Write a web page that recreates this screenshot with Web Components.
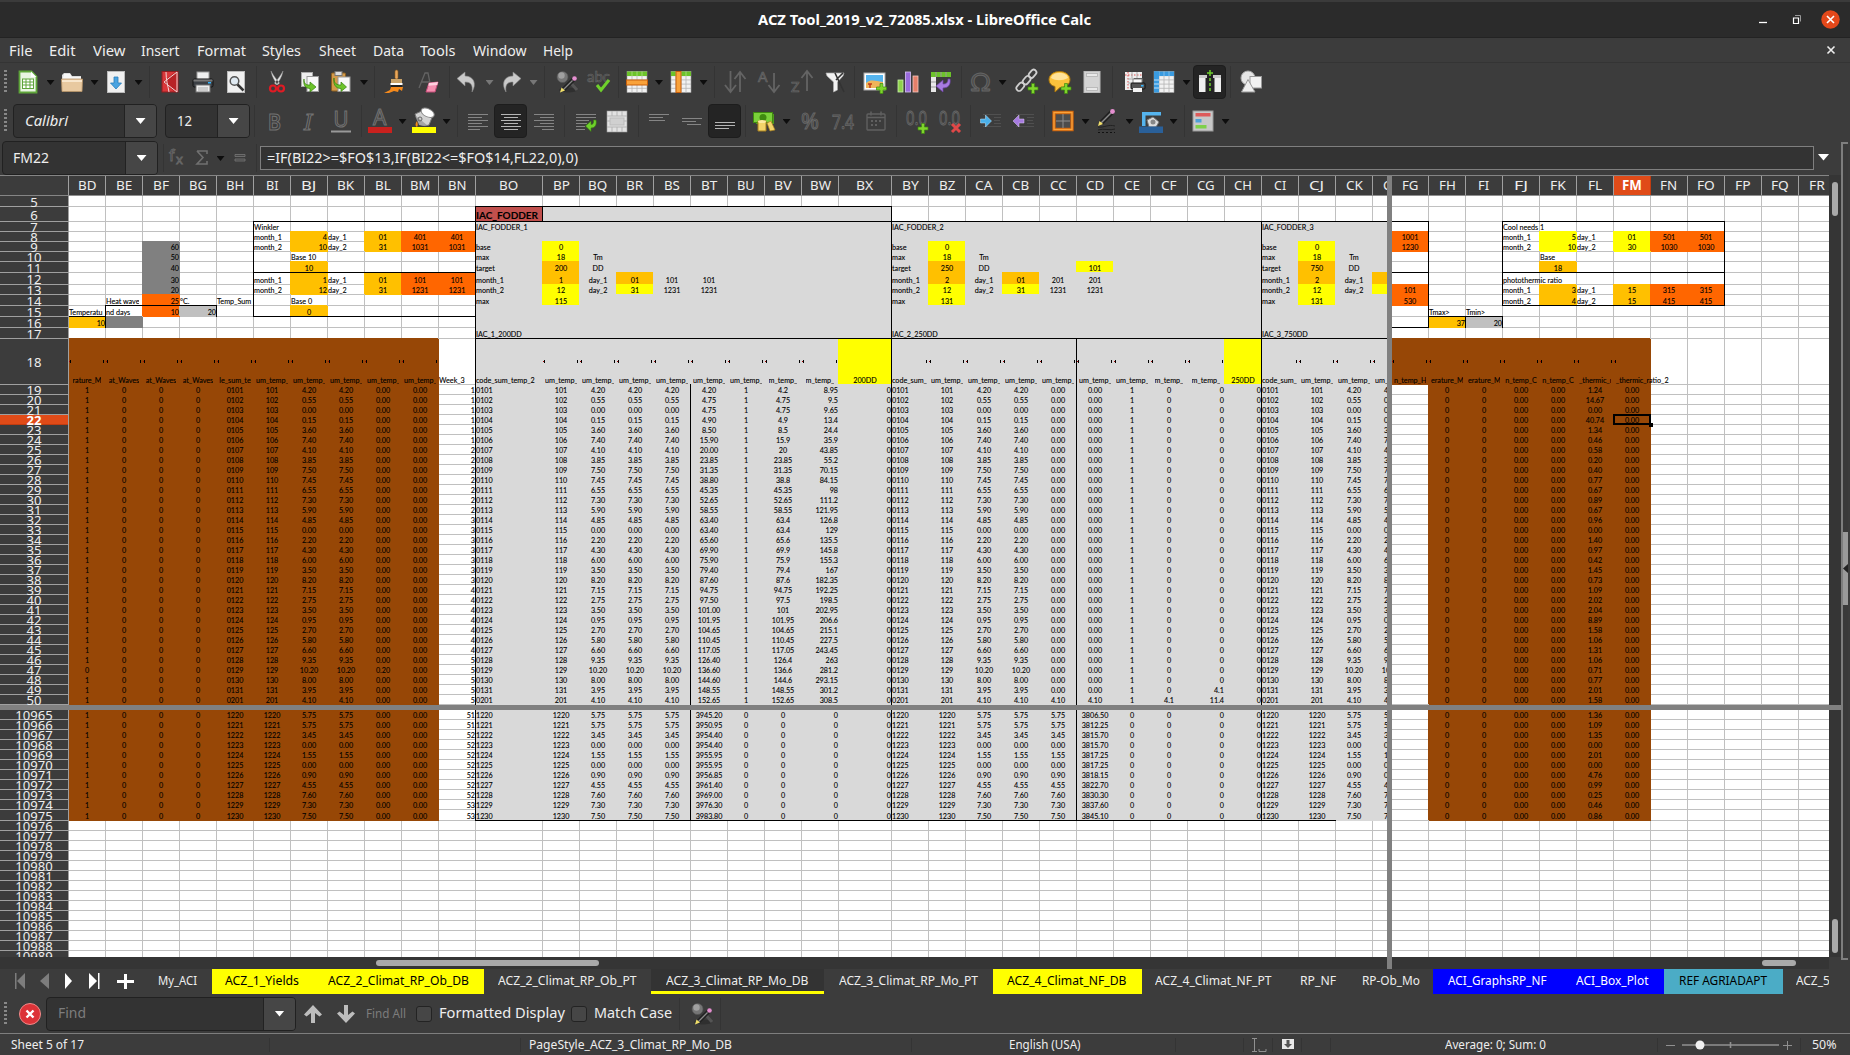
<!DOCTYPE html>
<html lang="en">
<head>
<meta charset="utf-8">
<title>ACZ Tool_2019_v2_72085.xlsx - LibreOffice Calc</title>
<style>
html,body{margin:0;height:100%;overflow:hidden;background:#3c3c3c}
</style>
</head>
<body>
<calc-window></calc-window>
<script>
const UI = '"Noto Sans","Open Sans",sans-serif';

class Base extends HTMLElement {
  constructor(){ super(); this.attachShadow({mode:'open'}); }
  render(html){ this.shadowRoot.innerHTML = html; }
}

/* Label squeezed or stretched horizontally to a given advance width */
class FitText extends Base {
  connectedCallback(){
    this.render(`<style>:host{display:block;white-space:nowrap;flex:none}span{display:inline-block;transform-origin:0 50%;white-space:pre}</style><span><slot></slot></span>`);
    const w = +this.getAttribute('w'), s = this.shadowRoot.querySelector('span');
    const n = s.getBoundingClientRect().width;
    this.style.width = w + 'px';
    if (n) s.style.transform = `scaleX(${w/n})`;
  }
}
customElements.define('fit-text', FitText);

/* ---------- icons ---------- */
const plus = (x,y,c='#7fd42c') => `<path d="M${x-1.5} ${y-5}h3v3.500h3.500v3h-3.500v3.500h-3v-3.500h-3.500v-3h3.500z" fill="${c}" stroke="#3f8a10" stroke-width=".7"/>`;
const lines = (a,c='#858585') => a.map(([x,y,w])=>`<rect x="${x}" y="${y}" width="${w}" height="1" fill="${c}"/>`).join('');
const sheet = (x,y,w,h,top) => { let s=`<rect x="${x}" y="${y}" width="${w}" height="${h}" fill="#f2f2f2" stroke="#999" stroke-width=".6"/>`;
  for(let i=1;i<4;i++) s+=`<path d="M${x+i*w/4} ${y}v${h}" stroke="#b4b4b4" stroke-width=".8"/>`;
  for(let i=1;i<5;i++) s+=`<path d="M${x} ${y+i*h/5}h${w}" stroke="#b4b4b4" stroke-width=".8"/>`;
  return s+`<rect x="${x}" y="${y}" width="${w}" height="4.500" fill="${top}"/><path d="M${x+w/4} ${y}v4.500M${x+w/2} ${y}v4.500M${x+w*3/4} ${y}v4.500" stroke="#fff" stroke-opacity=".35"/>`; };
const page = `<rect x="3.500" y="1.500" width="17" height="21" fill="#f0f0f0" stroke="#bbb"/>`;
const ICON = {
 new:`<path d="M3.500 1.500h12l5 5v16h-17z" fill="#e9f5e2" stroke="#5fa53a" stroke-width="1.800"/><path d="M15 1.500v5.500h5.500z" fill="#fff"/><rect x="6.500" y="9" width="11" height="9.500" fill="#fff" stroke="#5fa53a"/><path d="M6 12h12M6 15h12M10 9v10M14 9v10" stroke="#5fa53a"/>`,
 open:`<path d="M2 21V5l2-2h6l2 3h9v3z" fill="#ddd"/><path d="M4 4h6l2 3h9v4H2z" fill="#f7f7f7"/><path d="M1.500 9h21l-.5 12.500h-20z" fill="#e8c9a0" stroke="#b9966a" stroke-width=".8"/><path d="M2 10h20v2H2z" fill="#f8e6cc"/>`,
 save:`${page}<path d="M10 7h4v6h3.500L12 19l-5.500-6H10z" fill="#4aa3e0" stroke="#2a7fbd" stroke-width=".8"/>`,
 pdf:`<rect x="4" y="1.500" width="16" height="20.500" fill="#d9373a" stroke="#8f1d20"/><path d="M17 2 5 12l12 10h3V2z" fill="#b82226"/><path d="M19 2v20L6 12zM8 2c0 8 2 14 3 20" fill="none" stroke="#f4d6d6" stroke-width="1"/>`,
 print:`<rect x="6" y="2" width="12" height="8" fill="#f0f0f0" stroke="#999"/><rect x="2" y="9" width="20" height="8" rx="1.500" fill="#3b3f44" stroke="#111"/><path d="M2.500 9.500h19v2h-19z" fill="#777"/><rect x="17" y="12" width="3" height="1.500" fill="#35b6ff"/><rect x="5" y="15" width="14" height="7" fill="#eee" stroke="#777"/><path d="M7 18h10M7 20h10" stroke="#aaa"/>`,
 preview:`${page}<circle cx="10.500" cy="11" r="4.300" fill="#dfe9f1" stroke="#555" stroke-width="1.500"/><path d="m13.500 14.500 6 6" stroke="#333" stroke-width="2.500"/>`,
 cut:`<path d="M6 1c1 6 4 10 6.500 14L14.500 13C11 9 8 5 6 1zM18 1c-1 6-4 10-6.500 14L9.500 13C13 9 16 5 18 1z" fill="#e8e8e8" stroke="#999" stroke-width=".5"/><circle cx="8" cy="18.500" r="3" fill="none" stroke="#e01b24" stroke-width="2.200"/><circle cx="16" cy="18.500" r="3" fill="none" stroke="#e01b24" stroke-width="2.200"/>`,
 copy:`<rect x="3.500" y="2.500" width="11" height="14" fill="#eee" stroke="#aaa"/><rect x="9" y="6.500" width="11.500" height="15" fill="#f8f8f8" stroke="#999"/><path d="M6 9c0 5 2 6 6 6v-3l6 5-6 5v-3.500c-5 0-7-4-6-9.500z" fill="#6cc32a" stroke="#35800c" stroke-width=".7"/>`,
 paste:`<rect x="2.500" y="3" width="14" height="18" rx="1" fill="#d39a4a" stroke="#8b5e20"/><rect x="6" y="1.500" width="7" height="4" fill="#ddd" stroke="#777"/><rect x="9" y="7" width="12" height="14.500" fill="#f8f8f8" stroke="#999"/><path d="M5 8c0 6 3 7 7 7v-3l5.500 5-5.500 4.500v-3c-6 0-8-5-7-10.500z" fill="#6cc32a" stroke="#35800c" stroke-width=".7"/>`,
 brush:`<rect x="12" y="0" width="3" height="9" rx="1.500" fill="#e9a75c" stroke="#8e5c1c" stroke-width=".6"/><path d="M8 9h11v5H8z" fill="#c9a36a"/><rect x="7.500" y="13" width="12" height="2" fill="#fff"/><path d="M8 15h11v3H8z" fill="#222"/><path d="M8 17h12l-1 4-3-2-1 3-4-1-5 2H1l6-3z" fill="#f58a1c"/>`,
 clear:`<path d="m2 18 6-15h3l3 15M5 12h7" fill="none" stroke="#636363" stroke-width="1.300"/><path d="m12 13 9-1-3 10H9z" fill="#f58fb0" stroke="#c44c78"/><path d="m12 13 9-1-.8 3-9 .8z" fill="#ffd0df"/>`,
 undo:`<path d="M2 8.500 10 2v4c9 0 12 8 7 16 1-7-1-10-7-10v4z" fill="#c9c9c9" stroke="#888" stroke-width=".6"/>`,
 redo:`<path d="M22 8.500 14 2v4C5 6 2 14 7 22c-1-7 1-10 7-10v4z" fill="#c9c9c9" stroke="#888" stroke-width=".6"/>`,
 find:`<ellipse cx="13" cy="20" rx="9" ry="2.500" fill="#2f2f2f"/><circle cx="7.500" cy="7" r="5.500" fill="#767676" stroke="#555" stroke-width=".6"/><circle cx="6.500" cy="5.500" r="3.200" fill="#a0a0a0"/><path d="m15 12 7 8" stroke="#555" stroke-width="3"/><path d="m8 20 11-11" stroke="#222" stroke-width="4.400"/><path d="m8.500 19.500 9-9" stroke="#8a8a8a" stroke-width="1.300"/><circle cx="19.500" cy="8.500" r="2.300" fill="#e58fd0"/><path d="m5 22.500 1.500-5 3.500 3z" fill="#f2e06a"/>`,
 spell:`<text x="0" y="12" font-family="Lato,sans-serif" font-size="15" textLength="23" lengthAdjust="spacingAndGlyphs" fill="#3f3f3f" stroke="#686868" stroke-width=".6">abc</text><path d="m10 15 4 5 8-10" fill="none" stroke="#6fd02c" stroke-width="3"/>`,
 rowi:`${sheet(2,1.500,20,21,'#6cc32a')}<rect x="1.500" y="10" width="21" height="5" fill="#f9a23a" stroke="#c8600c"/>`,
 coli:`${sheet(2,1.500,20,21,'#6cc32a')}<rect x="7" y="1.500" width="5" height="21" fill="#f9a23a" stroke="#c8600c"/>`,
 sort:`<path d="M7.500 1v20M2 15l5.500 7 5.500-7M17 22V2M11.500 9 17 2l5.500 7" fill="none" stroke="#646464" stroke-width="1.800"/>`,
 asc:`<text x="1" y="12" font-family="Lato,sans-serif" font-size="14" fill="#3f3f3f" stroke="#6a6a6a" stroke-width=".7">A</text><path d="M17 3v18M11.500 15l5.500 7 5.500-7" fill="none" stroke="#646464" stroke-width="1.800"/>`,
 desc:`<text x="1" y="22" font-family="Lato,sans-serif" font-size="14" fill="#3f3f3f" stroke="#6a6a6a" stroke-width=".7">Z</text><path d="M17 21V2M11.500 8 17 1l5.500 7" fill="none" stroke="#646464" stroke-width="1.800"/>`,
 filter:`<path d="M3 3h18l-1 3-5.500 6v8l-4 2V12L4 6z" fill="#f2f2f2" stroke="#aaa" stroke-width=".7"/><path d="m12 3 9 19M13 10l7-7" stroke="#333" stroke-width="1.600"/>`,
 image:`<rect x="1" y="3" width="21" height="17" fill="#fff" stroke="#aaa"/><rect x="3" y="5" width="17" height="13" fill="#55b4ee"/><path d="M3 13c5-4 9-2 17-1v6H3z" fill="#f0b45a"/><path d="M7 18v-4M5 14h4" stroke="#c03a1a" stroke-width="1.500"/>${plus(18.500,18.500)}`,
 chart:`<rect x="2" y="10" width="5" height="12" fill="#8fd24a" stroke="#c9efab" stroke-width=".8"/><rect x="9.500" y="2" width="5" height="20" fill="#9a6bdc" stroke="#d8c3f5" stroke-width=".8"/><rect x="17" y="6" width="5" height="16" fill="#e57f6a" stroke="#f6c9c0" stroke-width=".8"/>`,
 pivot:`<rect x="2" y="2" width="20" height="5" fill="#6cc32a"/><rect x="2" y="7" width="5" height="15" fill="#e8e8e8"/><path d="M7 2v5M12 2v5M17 2v5M2 12h5M2 17h5" stroke="#999"/><path d="M21 9c1 6-2 9-7 9v4l-7-6 7-6v4c3 0 5-1 5-5z" fill="#a77be0" stroke="#6d44a8" stroke-width=".7"/>`,
 omega:`<text x="1" y="21" font-family="Lato,sans-serif" font-size="25" textLength="21" lengthAdjust="spacingAndGlyphs" fill="#4a4a4a" stroke="#656565" stroke-width="1">Ω</text>`,
 link:`<g fill="none" stroke="#cfcfcf" stroke-width="1.800"><rect x="13" y="1.500" width="9" height="5.500" rx="2.700" transform="rotate(-50 17 4)"/><rect x="7" y="7.500" width="9" height="5.500" rx="2.700" transform="rotate(-50 11.500 10)"/><rect x="1" y="14" width="9" height="5.500" rx="2.700" transform="rotate(-50 5.500 17)"/></g>${plus(18,18.500)}`,
 comment:`<path d="M11.500 1.500c6 0 10.500 3.500 10.500 8s-4 8-10 8l-5 4.500v-5.500C3 15.500 1 13 1 9.500c0-4.500 4.500-8 10.500-8z" fill="#fbc23c" stroke="#a8740c"/><path d="M11.500 3c5 0 8 2 8.500 5-6 3-12 3-17 0 .5-3 3.500-5 8.500-5z" fill="#ffe39a"/>${plus(18,18.500)}`,
 hdr:`<rect x="4" y="1.500" width="16" height="21" fill="#d4d4d4" stroke="#bbb"/><rect x="6.500" y="3.500" width="11" height="3" fill="#e8e8e8" stroke="#b2b2b2" stroke-width=".8"/><rect x="6.500" y="17.500" width="11" height="3" fill="#e8e8e8" stroke="#b2b2b2" stroke-width=".8"/>`,
 parea:`<path d="M3 2h17v6h-8v12H3z" fill="#eee"/><path d="M3 5h17M6 2v18" stroke="#e05050" stroke-dasharray="1.500 1.500"/><path d="M6 9h6M6 13h4M10 2v6M15 2v6" stroke="#aaa"/><rect x="11" y="9" width="9" height="5" fill="#fafafa" stroke="#888"/><rect x="9" y="13" width="14" height="6" rx="1" fill="#555" stroke="#111"/><rect x="19" y="15" width="2.500" height="1.500" fill="#35b6ff"/><rect x="11" y="18" width="9" height="4" fill="#f4f4f4"/>`,
 freeze:`${sheet(2,1.500,20,21,'#3a9be0')}<rect x="2" y="1.500" width="5" height="21" fill="#3a9be0"/><path d="M2 10h5M2 14h5M2 18h5" stroke="#bfe0fa"/>`,
 split:`<rect x="1" y="5" width="6.500" height="17" fill="#efefef"/><rect x="16.500" y="5" width="6.500" height="17" fill="#efefef"/><path d="M1 5h8v3H1zM15 5h8v3h-8z" fill="#ccc"/><path d="M12 0v6M9 3h6" stroke="#6fd02c" stroke-width="1.500"/><path d="M12 8v15" stroke="#6fd02c" stroke-width="1.500" stroke-dasharray="3 2"/>`,
 shapes:`<circle cx="9" cy="8" r="7" fill="#e6e6e6" stroke="#aaa"/><rect x="11" y="6.500" width="11.500" height="11.500" fill="#f2f2f2" stroke="#999"/><path d="M9 9.500 16 22H2.500z" fill="#eee" stroke="#999"/>`,
 bold:`<text x="5" y="21" font-family="Noto Sans,sans-serif" font-weight="600" font-size="22" textLength="13" lengthAdjust="spacingAndGlyphs" fill="#3c3c3c" stroke="#727272" stroke-width="1">B</text>`,
 ital:`<text x="8" y="21" font-family="Noto Serif,Liberation Serif,serif" font-style="italic" font-size="22" fill="#3c3c3c" stroke="#727272" stroke-width="1">I</text>`,
 under:`<text x="4.500" y="18" font-family="Noto Sans,sans-serif" font-size="21" textLength="15" lengthAdjust="spacingAndGlyphs" fill="#3c3c3c" stroke="#727272" stroke-width="1">U</text><path d="M2 22.500h20" stroke="#999" stroke-width="2"/>`,
 fcolor:`<text x="5" y="16" font-family="Noto Sans,sans-serif" font-size="21" fill="#3c3c3c" stroke="#727272" stroke-width="1">A</text><rect x="0" y="18" width="24" height="6" fill="#c9211e"/>`,
 bucket:`<path d="m3 5 9-4 9 5-4 10c-6 2-11 0-14-11z" fill="#d2d2d2" stroke="#777"/><path d="m4 7 3 9c3 1 7 1 8 0z" fill="#a5a5a5"/><ellipse cx="15.500" cy="3.500" rx="7" ry="4" fill="#fff" stroke="#888" transform="rotate(25 15 4)"/><circle cx="8" cy="10" r="2" fill="none" stroke="#666"/><path d="M5 12c-2 3-2 5 0 6 1-1 1-3 0-6z" fill="#f38b1a"/><rect x="0" y="18" width="24" height="6" fill="#ff0"/>`,
 left:lines([[2,5,20],[2,8,14],[2,11,20],[2,14,14],[2,17,20],[2,20,12]]),
 center:lines([[2,5,20],[5,8,14],[2,11,20],[5,14,14],[2,17,20],[5,20,14]],'#b5b5b5'),
 right:lines([[2,5,20],[8,8,14],[2,11,20],[8,14,14],[2,17,20],[10,20,12]]),
 wrap:lines([[2,5,20],[2,8,20],[2,11,13],[2,14,11],[2,17,9],[2,20,9]])+`<path d="M19.500 11h2.500c1 5-1 8-5 8v3.500L11.500 17l5.500-5v3.500c2 0 3-1.500 2.500-4.500z" fill="#6fd02c" stroke="#35800c" stroke-width=".6"/>`,
 merge:`<rect x="2" y="2" width="20" height="21" fill="#e2e2e2" stroke="#999" stroke-width=".6"/><path d="M2 7h20M2 18h20M7 2v5M12 2v5M17 2v5M7 18v5M12 18v5M17 18v5M2 12h5M17 12h5" stroke="#b4b4b4"/><rect x="5" y="9" width="14" height="7" fill="#d0d0d0" stroke="#bbb"/>`,
 top:lines([[2,5,20],[2,8,14],[2,11,16]]),
 mid:lines([[2,9,20],[2,12,14],[7,15,14]]),
 bot:lines([[2,13,20],[2,16,20],[2,19,14]],'#b5b5b5'),
 money:`<rect x="4" y="5" width="18" height="10" fill="#4e9a1c"/><rect x="1.500" y="3.500" width="19" height="10" fill="#7ad03a" stroke="#3f8a10"/><circle cx="11" cy="8.500" r="3.500" fill="#3f8a10"/><path d="M6 12h8v10H6z" fill="#f3d46a" stroke="#a8801c"/><ellipse cx="10" cy="12.500" rx="4" ry="1.500" fill="#fbeaa0"/><path d="m15 14 4-2 4 9-5 1z" fill="#f3d46a" stroke="#a8801c" stroke-width=".7"/>`,
 pct:`<text x="3" y="20" font-family="Noto Sans,sans-serif" font-size="22" textLength="18" lengthAdjust="spacingAndGlyphs" fill="#3c3c3c" stroke="#686868" stroke-width=".9">%</text>`,
 num:`<text x="1" y="20" font-family="Noto Sans,sans-serif" font-size="19" textLength="22" lengthAdjust="spacingAndGlyphs" fill="#3c3c3c" stroke="#686868" stroke-width=".9">7.4</text>`,
 date:`<rect x="3" y="5" width="18" height="16" rx="1" fill="none" stroke="#606060" stroke-width="1.400"/><path d="M3 8.500h18M7 2.500v4M17 2.500v4" stroke="#606060" stroke-width="1.600"/><path d="M7 12h2M11 12h2M15 12h2M7 16h2M11 16h2" stroke="#606060" stroke-width="2"/>`,
 deca:`<text x="1" y="16" font-family="Noto Sans,sans-serif" font-size="20" textLength="21" lengthAdjust="spacingAndGlyphs" fill="#3c3c3c" stroke="#686868" stroke-width=".9">0.0</text>${plus(18,19.500)}`,
 decd:`<text x="1" y="16" font-family="Noto Sans,sans-serif" font-size="20" textLength="21" lengthAdjust="spacingAndGlyphs" fill="#3c3c3c" stroke="#686868" stroke-width=".9">0.0</text><path d="m14 15 8 8M22 15l-8 8" stroke="#e04848" stroke-width="3"/>`,
 ind:lines([[4,5,18],[15,8,7],[15,11,6],[15,14,7],[4,17,18]],'#505050')+`<path d="M1.500 10h5V6l6 6-6 6v-4h-5z" fill="#4ab0ea" stroke="#bfe3f8" stroke-width=".5"/>`,
 outd:lines([[4,5,18],[15,8,7],[15,11,6],[15,14,7],[4,17,18]],'#505050')+`<path d="M12 10H7V6l-6 6 6 6v-4h5z" fill="#a77be0" stroke="#dcc9f5" stroke-width=".5"/>`,
 border:`<path d="M3 3.500h18v17H3z" fill="#4c4c4c" stroke="#c8600c" stroke-width="3.400"/><path d="M3 3.500h18v17H3z" fill="none" stroke="#f9a23a" stroke-width="1.400"/><path d="M12 5v14M5 12h14" stroke="#8e8e8e" stroke-width="1"/>`,
 bstyle:`<path d="M7 14 18 3" stroke="#222" stroke-width="5"/><path d="m7 14 11-11" stroke="#8a8a8a" stroke-width="1.400"/><circle cx="18.500" cy="2.500" r="2.400" fill="#e58fd0"/><path d="m4 17 1.500-5 3.500 3z" fill="#f2e06a"/><path d="M4 18c6 1 10-3 17-1M4 21c6-2 12 1 17-1" stroke="#222" fill="none"/><path d="M4 23.500h17" stroke="#111" stroke-dasharray="2 2"/>`,
 bcolor:`<rect x="4" y="3" width="18" height="3.500" fill="#55b4ee"/><rect x="3" y="3" width="3.500" height="14" fill="#55b4ee"/><path d="m8 11 6-3 6 5-3 5H10z" fill="#ddd" stroke="#777"/><circle cx="14" cy="13" r="2.500" fill="#888"/><rect x="0" y="17.500" width="24" height="6.500" fill="#2a6099"/>`,
 cond:`<rect x="2" y="2" width="20" height="20" fill="#c8c8c8" stroke="#999"/><rect x="4.500" y="4" width="15" height="3.500" fill="#dd5a5a"/><rect x="4.500" y="10" width="6" height="3.500" fill="#4ea0d8"/><rect x="4.500" y="16" width="11" height="3.500" fill="#7ed04a"/>`,
 up:`<path d="M12 3 3 12.500l2.500 2L10 11v10h4V11l4.500 3.500 2.500-2z" fill="#bdbdbd"/>`,
 down:`<path d="M12 21 3 11.500l2.500-2L10 13V3h4v10l4.500-3.500 2.500 2z" fill="#bdbdbd"/>`,
 stop:`<circle cx="12" cy="12" r="10.500" fill="#dc3338" stroke="#f28a8a"/><path d="m8.500 8.500 7 7M15.500 8.500l-7 7" stroke="#fff" stroke-width="2.400"/>`,
 fx:`<text x="2" y="15" font-family="Noto Sans,sans-serif" font-size="16" fill="#3c3c3c" stroke="#6a6a6a" stroke-width=".8">f</text><text x="9" y="18" font-family="Noto Sans,sans-serif" font-size="13" fill="#3c3c3c" stroke="#6a6a6a" stroke-width=".8">x</text>`,
 sum:`<path d="M7 5h10v3M7 5l6 6.500L7 18h10v-3" fill="none" stroke="#707070" stroke-width="1.600"/>`,
 eq:`<path d="M7 8.500h10v2H7zM7 13h10v2H7z" fill="#464646" stroke="#777" stroke-width=".8"/>`
};
class ToolIcon extends Base {
  connectedCallback(){
    const on = this.hasAttribute('on');
    this.render(`<style>:host{display:flex;flex:none;width:33px;height:34px;align-items:center;justify-content:center;box-sizing:border-box;border-radius:4px;${on?'background:#242424;border:1px solid #1d1d1d':''}}svg{display:block;overflow:visible;flex:none}</style><svg width="24" height="24" viewBox="0 0 24 24">${ICON[this.getAttribute('name')]}</svg>`);
  }
}
customElements.define('tool-icon', ToolIcon);

class DropArrow extends Base {
  connectedCallback(){
    this.render(`<style>:host{display:block;flex:none;width:8px;height:5px;margin-top:1px}i{display:block;width:100%;height:100%;background:${this.getAttribute('color')||'#0d0d0d'};clip-path:polygon(0 0,100% 0,50% 100%)}</style><i></i>`);
  }
}
customElements.define('drop-arrow', DropArrow);

/* Row of items, each named with the centre it flows to */
function flow(items, x0){
  let x = x0, out = '';
  for (const [kind, c, arg] of items) {
    const w = kind==='|' ? 1 : kind==='v' || kind==='g' ? 8 : kind==='c' ? arg.w : 33;
    const m = c - w/2 - x; x = c + w/2;
    const st = `style="margin-left:${m.toFixed(1)}px"`;
    out += kind==='|' ? `<i class="sep" ${st}></i>` :
      kind==='v' ? `<drop-arrow ${st}></drop-arrow>` :
      kind==='g' ? `<drop-arrow color="#777" ${st}></drop-arrow>` :
      kind==='c' ? `<combo-box w="${arg.w}" split="${arg.s}" ${arg.i?'italic':''} label="${arg.t}" tw="${arg.tw}" pad="${arg.p}" ${arg.dim?'dim':''} ${st}></combo-box>` :
      `<tool-icon name="${kind}" ${arg?'on':''} ${st}></tool-icon>`;
  }
  return out;
}
class ComboBox extends Base {
  connectedCallback(){
    const g = n => this.getAttribute(n);
    this.render(`<style>:host{display:flex;flex:none;box-sizing:border-box;width:${g('w')}px;height:34px;border:1px solid #212121;border-radius:4px;background:#333;font:${this.hasAttribute('italic')?'italic ':''}14px ${UI};color:${this.hasAttribute('dim')?'#7d7d7d':'#eee'};overflow:hidden}
    .t{width:${g('split')}px;flex:none;display:flex;align-items:center;padding:0 0 2px ${g('pad')}px;box-sizing:border-box}
    .b{flex:1;border-left:1px solid #222;background:#464646;display:flex;align-items:center;justify-content:center}
    drop-arrow{width:10px;height:6px;margin:0}</style><div class="t"><fit-text w="${g('tw')}">${g('label')}</fit-text></div><div class="b"><drop-arrow color="#fff"></drop-arrow></div>`);
  }
}
customElements.define('combo-box', ComboBox);

class ToolBar extends Base {
  set items(v){
    this.render(`<style>:host{display:flex;flex:none;align-items:center;background:#3c3c3c}
    .sep{width:1px;height:32px;background:#343434;flex:none}
    .h{width:3px;height:24px;margin-left:4px;flex:none;background:repeating-linear-gradient(#888 0 2px,transparent 2px 4px)}</style><div class="h"></div>${flow(v,7)}`);
  }
}
customElements.define('tool-bar', ToolBar);

class TitleBar extends Base {
  connectedCallback(){
    this.render(`<style>:host{display:flex;align-items:center;height:38px;flex:none;box-sizing:border-box;background:#2b2b2b;border-top:2px solid #3b3b3b;border-bottom:1px solid #232323;font:bold 14.5px ${UI};color:#fff}
    .t{margin-left:758px;padding-bottom:2px}svg{margin-left:auto;display:block}</style>
    <fit-text class="t" w="333">ACZ Tool_2019_v2_72085.xlsx - LibreOffice Calc</fit-text>
    <svg width="96" height="34"><path d="M5 19.500h8" stroke="#fff" stroke-width="1.300"/><path d="M39.500 15h5v5.500h-5z" fill="none" stroke="#fff" stroke-width="1.200"/><path d="M41 12.500h5.500v6" fill="none" stroke="#999"/><circle cx="76.500" cy="16.500" r="9.200" fill="#e4481a"/><path d="m73 13 7 7M80 13l-7 7" stroke="#fff" stroke-width="1.600"/></svg>`);
  }
}
customElements.define('title-bar', TitleBar);

class MenuBar extends Base {
  connectedCallback(){
    const m=[['File',9,23.5],['Edit',49,26.5],['View',92.5,32.5],['Insert',141,38.5],['Format',196.500,49],['Styles',262,39],['Sheet',318.500,37],['Data',372.500,31],['Tools',420,35.500],['Window',472.500,53.500],['Help',542.5,30]];
    let x=0;
    this.render(`<style>:host{display:flex;align-items:center;height:25px;flex:none;box-sizing:border-box;border-bottom:1px solid #343434;font:14px ${UI};color:#eee}svg{margin-left:auto;margin-right:14px}</style>${m.map(([t,p,w])=>{const s=`<fit-text w="${w}" style="margin-left:${p-x}px">${t}</fit-text>`;x=p+w;return s}).join('')}<svg width="10" height="10"><path d="m1.500 1.500 7 7M8.500 1.500l-7 7" stroke="#eee" stroke-width="1.600"/></svg>`);
  }
}
customElements.define('menu-bar', MenuBar);

class FormulaBar extends Base {
  connectedCallback(){
    this.render(`<style>:host{display:flex;align-items:center;height:34px;flex:none;font:14px ${UI};color:#eee}
    .sep{width:1px;height:28px;background:#343434;flex:none}
    .in{width:1554px;height:24px;margin-left:3px;box-sizing:border-box;border:1px solid #7f7f7f;background:#333;display:flex;align-items:center;padding:0 0 2px 6px;flex:none}
    .a{width:12px;height:7px;margin:0 0 2px 4px}</style>
    ${flow([['c',80,{w:156,s:122,t:'FM22',tw:36,p:10}],['|',163],['fx',179],['sum',202],['v',220.5],['eq',240],['|',256]],0)}
    <div class="in"><fit-text w="311">=IF(BI22&gt;=$FO$13,IF(BI22&lt;=$FO$14,FL22,0),0)</fit-text></div><drop-arrow class="a" color="#fff"></drop-arrow>`);
  }
}
customElements.define('formula-bar', FormulaBar);

/* ---------- sheet model ---------- */
const A='ABCDEFGHIJKLMNOPQRSTUVWXYZ';
const colName=n=>A[Math.floor(n/26)-1]+A[n%26];
const idx=s=>(A.indexOf(s[0])+1)*26+A.indexOf(s[1]);
const range=(a,b)=>{const r=[];for(let i=a;i<=b;i++)r.push(i);return r};
const LEFT=range(idx('BD'),idx('CL')).map(colName), RIGHT=range(idx('FG'),idx('FR')).map(colName);
const TOP=range(5,50), LOW=range(10965,10989);
const cw=c=>c==='BO'?67:c==='BX'?53:37;
const H={5:11,6:15,11:11,12:12,14:11,15:11,16:11,17:11,18:46,10975:11};
const rh=r=>H[r]||10;
const cells={};
const cell=(c,r)=>cells[c+r]||(cells[c+r]={});
const put=(c,r,t,a,bg)=>{const o=cell(c,r);o.t=t;if(a)o.a=a;if(bg)o.bg=bg};
const between=(a,b)=>range(idx(a),idx(b)).map(colName);
const fill=(a,b,rows,bg)=>between(a,b).forEach(c=>rows.forEach(r=>cell(c,r).bg=bg));
const edge=(a,b,rows,s)=>between(a,b).forEach(c=>rows.forEach(r=>{const o=cell(c,r);o.b=(o.b||'')+' '+s}));
const box=(a,b,r1,r2,s='tlrb')=>{
  if(s.includes('t'))edge(a,b,[r1],'t'); if(s.includes('b'))edge(a,b,[r2],'b');
  if(s.includes('l'))edge(a,a,range(r1,r2),'l'); if(s.includes('r'))edge(b,b,range(r1,r2),'r');
};
const DATA=[...range(19,50),...range(10965,10975)];
const BR='#974706',GR='#d9d9d9',YE='#ffff00',AM='#ffc000',OR='#ff6600',DK='#808080',SI='#c0c0c0';
fill('BD','BM',[18,...DATA],BR); fill('FH','FM',[18,...DATA],BR); fill('FG','FG',[18],BR);
fill('BO','BX',[...range(6,18),...DATA],GR); fill('BY','CL',[...range(7,18),...DATA],GR);

const T=[4.20,.55,0,.15,3.6,7.4,4.1,3.85,7.5,7.45,6.55,7.3,5.9,4.85,0,2.2,4.3,6,3.5,8.2,7.15,2.75,3.5,.95,2.7,5.8,6.6,9.35,10.2,8,3.95,4.1, 5.75,5.75,3.45,0,1.55,0,.9,4.55,7.6,7.3,7.5];
const C1=[8.95,9.5,9.65,13.4,24.4,35.9,43.85,55.2,70.15,84.15,98,111.2,121.95,126.8,129,135.5,145.8,155.3,167,182.35,192.25,198.5,202.95,206.6,215.1,227.5,243.45,263,281.2,293.15,301.2,308.5];
const S1=['3945.20','3950.95','3954.40','3954.40','3955.95','3955.95','3956.85','3961.40','3969.00','3976.30','3983.80'];
const S2=['3806.50','3812.25','3815.70','3815.70','3817.25','3817.25','3818.15','3822.70','3830.30','3837.60','3845.10'];
const FL='1.24,14.67,0.00,40.74,1.34,0.46,0.58,0.20,0.40,0.77,0.67,0.89,0.67,0.96,0.00,1.40,0.97,0.42,1.45,0.73,1.09,2.02,2.04,8.89,1.58,1.06,1.31,1.06,0.71,0.77,2.01,1.58,1.36,1.09,1.35,0.00,2.01,0.00,4.76,0.99,0.25,0.46,0.86'.split(',');
let acc=0;
DATA.forEach((r,i)=>{
  const low=i>=32, k=i-32, n=low?1220+k:i===31?201:101+i, code=String(n).padStart(4,'0'), t=T[i].toFixed(2);
  acc=Math.round((acc+T[i])*100)/100;
  put('BD',r,r===47?'0':'1'); ['BE','BF','BG'].forEach(c=>put(c,r,'0'));
  put('BH',r,code); put('BI',r,''+n); put('BJ',r,t); put('BK',r,t); put('BL',r,r===47?'0.20':'0.00'); put('BM',r,'0.00');
  put('BN',r,''+(low?(k<2?51:k<9?52:53):i<6?1:i<13?2:i<20?3:i<27?4:5),'r');
  ['BO','BY','CI'].forEach(c=>put(c,r,code,'l')); ['BP','BZ','CJ'].forEach(c=>put(c,r,''+n));
  ['BQ','BR','BS','CA','CB','CK','CL'].forEach(c=>put(c,r,t));
  put('BT',r,low?S1[k]:acc.toFixed(2)); put('BU',r,low?'0':'1'); put('BV',r,low?'0':''+acc); put('BW',r,low?'0':''+C1[i],'r'); put('BX',r,'0','r');
  const on=low||r===50;
  put('CC',r,on?t:'0.00'); put('CD',r,low?S2[k]:r===50?'4.10':'0.00'); put('CE',r,low?'0':'1'); put('CF',r,r===50?'4.1':'0');
  put('CG',r,r===49?'4.1':r===50?'11.4':'0','r'); put('CH',r,'0','r');
  put('FH',r,'0'); put('FI',r,'0'); put('FJ',r,'0.00'); put('FK',r,'0.00'); put('FL',r,FL[i]); put('FM',r,'0.00');
});
/* clipped column titles */
const clip=(c,t,m='lr')=>{const o=cell(c,18);o.t=t;o.m=m;o.clip=1};
clip('BD','rature_M');['BE','BF','BG'].forEach(c=>clip(c,'at_Waves'));clip('BH','le_sum_te');
[...between('BI','BM'),...between('BP','BU'),...between('BZ','CE'),'CJ','CK','CL'].forEach(c=>clip(c,'um_temp_'));
['BV','BW','CF','CG'].forEach(c=>clip(c,'m_temp_'));
put('BN',18,'Week_3','l');put('BO',18,'code_sum_temp_2','l');
['BY','CI'].forEach(c=>{clip(c,'code_sum_','r');cell(c,18).a='l'});
put('BX',18,'200DD','',YE);put('CH',18,'250DD','',YE);
clip('FG','n_temp_H');clip('FH','erature_M');clip('FI','erature_M');clip('FJ','n_temp_C');clip('FK','n_temp_C');clip('FL','_thermic_r');
put('FM',18,' _thermic_ratio_2','l');cell('FM',18).m='l';
/* Winkler block */
put('BI',7,'Winkler','l');
[[8,'month_1','4','day_1','01','401'],[9,'month_2','10','day_2','31','1031'],[12,'month_1','1','day_1','01','101'],[13,'month_2','12','day_2','31','1231']].forEach(([r,a,b,c,d,e])=>{
  put('BI',r,a,'l');put('BJ',r,b,'r',AM);put('BK',r,c,'l');put('BL',r,d,'',AM);put('BM',r,e,'',OR);put('BN',r,e,'',OR)});
put('BJ',10,'Base 10','l');put('BJ',11,'10','',AM);put('BJ',14,'Base 0','l');put('BJ',15,'0','',AM);
box('BI','BN',7,11,'tl');box('BI','BN',7,11,'b');box('BI','BN',12,15,'lb');
['60','50','40','30','20'].forEach((t,i)=>put('BF',9+i,t,'r',DK));
put('BF',14,'25','r',OR);put('BF',15,'10','r',OR);put('BG',14,'°C.','l');put('BG',15,'20','r',SI);
put('BE',14,'Heat wave','l');cell('BE',14).clip=1;put('BH',14,'Temp_Sum','l');put('BE',15,'nd days','l');
put('BD',15,'Temperatu','l');cell('BD',15).clip=1;put('BD',16,'10','r',AM);cell('BE',16).bg=DK;
box('BE','BG',15,15,'tlr');edge('BD','BD',[15],'b');edge('BD','BD',[16],'r');
/* fodder blocks */
put('BO',6,'IAC_FODDER','l','#c0504d');cell('BO',6).big=1;
box('BO','BO',6,6);box('BP','BX',6,6,'trb');box('BY','CL',7,7,'t');
const fod=(c0,n,v,m,foot)=>{const i=idx(c0),c=k=>colName(i+k);
  put(c0,7,'IAC_FODDER_'+n,'l');
  ['base','max','target','month_1','month_2','max'].forEach((t,k)=>{put(c0,9+k,t,'l');put(c(1),9+k,v[k],'',k===2||k===3?AM:YE)});
  put(c(2),10,'Tm');put(c(2),11,'DD');put(c(2),12,'day_1');put(c(2),13,'day_2');
  put(c(3),12,c0==='CI'?'':'01','',AM);put(c(3),13,c0==='CI'?'':'31','',YE);
  if(m){put(c(4),12,m);put(c(5),12,m);put(c(4),13,'1231');put(c(5),13,'1231')}
  put(c0,17,foot,'l')};
fod('BO',1,['0','18','200','1','12','115'],'101','IAC_1_200DD');
fod('BY',2,['0','18','250','2','12','131'],'201','IAC_2_250DD');
fod('CI',3,['0','18','750','2','12','131'],null,'IAC_3_750DD');
put('CD',11,'101','',YE);
edge('BO','CL',[17],'b');
const all=[...range(7,18),...DATA];
edge('BO','BO',all,'l');edge('BX','BX',all,'r');edge('CH','CH',all,'r');edge('BS','BS',DATA,'r');edge('CC','CC',[18,...DATA],'r');
edge('BO','CJ',[10975],'b');
/* right hand blocks */
put('FG',8,'1001','',OR);put('FG',9,'1230','',OR);put('FG',13,'101','',OR);put('FG',14,'530','',OR);
box('FG','FG',7,16,'trb');edge('FG','FG',[11],'b');
put('FH',15,'Tmax>','l');put('FI',15,'Tmin>','l');put('FH',16,'37','r',AM);put('FI',16,'20','r',SI);box('FH','FH',16,16,'tr');box('FI','FI',16,16,'tr');
put('FJ',7,'Cool needs 1','l');put('FJ',12,'photothermic ratio','l');
[[8,'month_1','5','day_1','01','501',YE],[9,'month_2','10','day_2','30','1030',YE],[13,'month_1','3','day_1','15','315',AM],[14,'month_2','4','day_2','15','415',AM]].forEach(([r,a,b,c,d,e,bg])=>{
  put('FJ',r,a,'l');put('FK',r,b,'r',bg);put('FL',r,c,'l');put('FM',r,d,'',bg);put('FN',r,e,'',OR);put('FO',r,e,'',OR)});
put('FK',10,'Base','l');put('FK',11,'18','',AM);
box('FJ','FO',7,14);edge('FJ','FO',[11],'b');
cell('FM',22).cur=1;

class SheetPane extends Base {
  connectedCallback(){
    const cols=this.getAttribute('side')==='left'?LEFT:RIGHT, rows=this.getAttribute('part')==='top'?TOP:LOW;
    let h='';
    for(const r of rows){
      h+=`<div class="r" style="height:${rh(r)}px">`;
      for(const c of cols){
        const o=cells[c+r]||{};
        const cls=['c','a'+(o.a||'c')];
        if(o.bg)cls.push('f'); if(o.clip)cls.push('clip'); if(o.big)cls.push('big'); if(o.cur)cls.push('cur');
        if(o.b)o.b.trim().split(' ').forEach(s=>cls.push('b'+s));
        h+=`<div class="${cls.join(' ')}" style="width:${cw(c)}px${o.bg?';--f:'+o.bg:''}">${o.t?`<span>${o.t.replace('>','&gt;')}</span>`:''}${o.m?[...o.m].map(s=>`<i class="m${s}"></i>`).join(''):''}</div>`;
      }
      h+='</div>';
    }
    this.render(`<style>
    :host{display:block;overflow:hidden;background:#fff;font:7.2px/9px Lato,sans-serif;color:#000;-webkit-text-stroke:.1px #000}
    .r{display:flex}
    .c{position:relative;flex:none;box-sizing:border-box;border-right:1px solid #c0c0c0;border-bottom:1px solid #c0c0c0;display:flex;align-items:flex-end;justify-content:center;white-space:pre}
    .al{justify-content:flex-start}.ar{justify-content:flex-end}
    .f{background:var(--f);border-color:var(--f);box-shadow:-1px -1px 0 var(--f)}
    span{position:relative;z-index:2;display:block;flex:none;margin-bottom:-1px}
    .clip span{max-width:32px;overflow:hidden}
    .al.clip span{max-width:35px}
    .big{font:bold 10px/13px Lato,sans-serif}
    .c::after{content:"";position:absolute;inset:-1px;z-index:3;border:0 solid #000;pointer-events:none}
    .bt::after{border-top-width:1px}.bb::after{border-bottom-width:1px}.bl::after{border-left-width:1px}.br::after{border-right-width:1px}
    i{position:absolute;top:21px;width:1px;height:3px;background:#000;z-index:2}
    .ml{left:1px}.ml::before{content:"";position:absolute;left:-1px;top:1px;width:1px;height:1px;background:#a00}.mr{right:1px}
    .cur::after{border-width:2px}
    .cur::before{content:"";position:absolute;right:-3px;bottom:-3px;width:4px;height:4px;background:#000;z-index:4}
    </style>${h}`);
  }
}
customElements.define('sheet-pane', SheetPane);

class ColHead extends Base {
  connectedCallback(){
    const cols=this.getAttribute('side')==='left'?LEFT:RIGHT;
    const w={B:8.7,C:8.4,D:9.8,E:7.7,F:7.3,G:9.2,H:9.5,I:3.8,J:6.7,K:8.5,L:7,M:11.6,N:9.8,O:10.5,P:8.3,Q:10.5,R:8.5,S:7.2,T:7.6,U:9.1,V:8.9,W:12.3,X:8.5,Y:8.2,Z:7.7,A:9};
    this.render(`<style>:host{display:flex;overflow:hidden;height:21px;box-sizing:border-box;border-top:1px solid #858585;border-bottom:1px solid #8f8f8f;background:#3c3c3c;font:13.3px/19px ${UI};color:#eee}
    div{flex:none;box-sizing:border-box;border-right:1px solid #a0a0a0;display:flex;justify-content:center}
    .on{background:#e04b18;color:#fff;font-weight:bold;border-color:#c23c10}</style>${cols.map(c=>`<div class="${c==='FM'?'on':''}" style="width:${cw(c)}px"><fit-text w="${w[c[0]]+w[c[1]]+(c==='FM'?1:0)}">${c}</fit-text></div>`).join('')}`);
  }
}
customElements.define('col-head', ColHead);

class RowHead extends Base {
  connectedCallback(){
    const rows=this.getAttribute('part')==='top'?TOP:LOW;
    this.render(`<style>:host{display:block;overflow:hidden;background:#3c3c3c;font:13.1px/13px ${UI};color:#eee;border-right:1px solid #a0a0a0}
    div{box-sizing:border-box;border-bottom:1px solid #a0a0a0;display:flex;align-items:center;justify-content:center}
    span{position:relative;top:1px;z-index:1;display:block;flex:none}
    .on{background:#e04b18;color:#fff;font-weight:bold;border-color:#c23c10}</style>${rows.map(r=>`<div class="${r===22?'on':''}" style="height:${rh(r)}px"><span>${r}</span></div>`).join('')}`);
  }
}
customElements.define('row-head', RowHead);

class SheetArea extends Base {
  connectedCallback(){
    this.render(`<style>
    :host{display:flex;flex:none;height:853px;background:#3c3c3c}
    .main{width:1841px;display:flex;flex-direction:column;flex:none}
    .grid{display:grid;grid-template-columns:69px 1318px 5px 437px 12px;grid-template-rows:21px 509px 5px 247px 12px;height:794px;overflow:hidden}
    .corner{background:#3c3c3c;border-top:1px solid #858585;border-bottom:1px solid #858585;border-right:1px solid #a0a0a0;box-sizing:border-box}
    .vs{background:#808080}
    .hs{grid-column:1/-1;background:#808080}
    .sb{background:#353535}
    .thumb{background:#a9a9a9;border-radius:3px}
    .v{width:6px;margin:0 3px}.h{height:6px;margin-top:3px}
    sheet-pane{min-width:0}
    .side{flex:1;display:flex;flex-direction:column;border-left:2px solid #7e7e7e;border-top:2px solid #7e7e7e;border-bottom:2px solid #7e7e7e;margin:-33px 2px 34px 0;box-sizing:border-box;background:#3a3a3a}
    .grip{height:73px;margin-top:388px;background:#9a9a9a;display:flex;align-items:center;justify-content:flex-end}
    .grip b{width:5px;height:9px;background:#222;clip-path:polygon(0 50%,100% 0,100% 100%)}
    </style>
    <div class="main"><div class="grid">
      <div class="corner"></div><col-head side="left"></col-head><div class="vs"></div><col-head side="right"></col-head><div class="sb" style="display:flow-root"><div class="thumb v" style="height:14px;margin-top:7px;border-radius:3px 3px 0 0"></div></div>
      <row-head part="top"></row-head><sheet-pane side="left" part="top"></sheet-pane><div class="vs"></div><sheet-pane side="right" part="top"></sheet-pane><div class="sb"><div class="thumb v" style="height:20px;border-radius:0 0 3px 3px"></div></div>
      <div class="hs"></div>
      <row-head part="low"></row-head><sheet-pane side="left" part="low"></sheet-pane><div class="vs"></div><sheet-pane side="right" part="low"></sheet-pane><div class="sb" style="display:flow-root"><div class="thumb v" style="height:34px;margin-top:209px"></div></div>
      <div class="sb"></div><div class="sb" style="display:flow-root"><div class="thumb h" style="width:223px;margin-left:307px"></div></div><div class="vs"></div><div class="sb" style="display:flow-root"><div class="thumb h" style="width:34px;margin-left:370px"></div></div><div></div>
    </div>
    <sheet-tabs></sheet-tabs></div>
    <div class="side"><div class="grip"><b></b></div></div>`);
  }
}

class SheetTabs extends Base {
  connectedCallback(){
    const t=[['My_ACI',68,39],['ACZ_1_Yields',101,74,'y'],['ACZ_2_Climat_RP_Ob_DB',171,141,'y'],['ACZ_2_Climat_RP_Ob_PT',167,138.5],['ACZ_3_Climat_RP_Mo_DB',173,142.5,'on'],['ACZ_3_Climat_RP_Mo_PT',169,139],['ACZ_4_Climat_NF_DB',149,119.5,'y'],['ACZ_4_Climat_NF_PT',144,116.500],['RP_NF',64,36],['RP-Ob_Mo',83,58],['ACI_GraphsRP_NF',129,98.500,'b'],['ACI_Box_Plot',102,72.500,'b'],['REF AGRIADAPT',119,88,'t']];
    this.render(`<style>:host{display:flex;height:25px;width:1829px;overflow:hidden;background:#3c3c3c;font:13px ${UI};color:#eee}
    div{display:flex;align-items:center;justify-content:center;flex:none;box-sizing:border-box;height:25px;padding:0 1px 4px 0}
    .y{background:#ff0;color:#000}.b{background:#00f;color:#fff}.t{background:#4bacc6;color:#000}.on{background:#333;border-bottom:3px solid #ff0;padding:0 1px 1px 0}
    svg{flex:none;display:block}</style>
    <svg width="144" height="25"><g fill="#7d7d7d"><path d="M15 4h1.500v16H15zM25 4v16l-8-8zM49 4v16l-9-8z"/></g><g fill="#fff"><path d="M65 4v16l7-8zM89 4v16l8-8zM98 4h1.500v16H98zM124 5h3v6h7v3h-7v6h-3v-6h-7v-3h7z"/></g></svg>
    ${t.map(([n,w,f,c])=>`<div class="${c||''}" style="width:${w}px"><fit-text w="${f}">${n}</fit-text></div>`).join('')}<div style="padding-left:13px"><fit-text w="39">ACZ_5_</fit-text></div>`);
  }
}
customElements.define('sheet-tabs', SheetTabs);
customElements.define('sheet-area', SheetArea);

class FindBar extends Base {
  connectedCallback(){
    this.render(`<style>:host{display:flex;align-items:center;height:39px;flex:none;font:14px ${UI};color:#eee;border-bottom:1px solid #7e7e7e;box-sizing:content-box}
    .sep{width:1px;height:32px;background:#343434;flex:none}
    .h{width:3px;height:24px;margin-left:4px;background:repeating-linear-gradient(#888 0 2px,transparent 2px 4px)}
    .k{width:16px;height:16px;box-sizing:border-box;border:1px solid #232323;border-radius:3px;background:#464646;flex:none}
    fit-text{padding-bottom:2px}
    .d{color:#7d7d7d;font-size:13px}</style><div class="h"></div>
    ${flow([['stop',30],['c',171,{w:250,s:216,t:'Find',tw:28,p:11,dim:1}],['up',313],['down',346]],7)}
    <fit-text class="d" w="40" style="margin-left:3px">Find All</fit-text>
    <div class="k" style="margin-left:10px"></div><fit-text w="126" style="margin-left:7px">Formatted Display</fit-text>
    <div class="k" style="margin-left:6px"></div><fit-text w="78" style="margin-left:7px">Match Case</fit-text>
    ${flow([['|',679.5],['find',702],['|',720.5]],672)}`);
  }
}
customElements.define('find-bar', FindBar);

class StatusBar extends Base {
  connectedCallback(){
    const it=[['t',11,73,'Sheet 5 of 17'],['s',269],['s',520],['t',529,203,'PageStyle_ACZ_3_Climat_RP_Mo_DB'],['s',911],['t',1009,71.500,'English (USA)'],['s',1175],['s',1243],['i',1250,18,'<path d="M2 1.500h5M4.500 1.500v13M2 14.500h5M9 12v2.500h7V12" fill="none" stroke="#909090"/>'],['s',1272],['i',1281,14,'<rect x="1" y="2" width="12" height="10" fill="#e8e8e8"/><path d="M5.500 3h3v4H11l-4 4-4-4h2.500z" fill="#555"/>'],['s',1301],['s',1330],['t',1445,101,'Average: 0; Sum: 0'],['s',1657],['i',1666,127,'<path d="M0 8.500h9M117 8.500h9M121.500 4v9" stroke="#909090"/><path d="M16 8h97M64.500 5v6" stroke="#909090" stroke-width="1.600"/><circle cx="34" cy="8" r="4.500" fill="#f0f0f0"/>'],['s',1800],['t',1812,24.5,'50%']];
    let x=0;
    this.render(`<style>:host{display:flex;align-items:center;height:21px;flex:none;font:12.7px ${UI};color:#eee}.sep{width:1px;height:14px;background:#343434;flex:none}fit-text{padding-bottom:2px}svg{flex:none;display:block}</style>${it.map(([k,p,w,t])=>{const m=`margin-left:${p-x}px`;w=k==='s'?1:w;x=p+w;
      return k==='s'?`<i class="sep" style="${m}"></i>`:k==='t'?`<fit-text w="${w}" style="${m}">${t}</fit-text>`:`<svg width="${w}" height="16" style="${m}">${t}</svg>`}).join('')}`);
  }
}
customElements.define('status-bar', StatusBar);

class CalcWindow extends Base {
  connectedCallback(){
    this.render(`<style>:host{display:flex;flex-direction:column;width:1850px;height:1055px;overflow:hidden;background:#3c3c3c}
    #a{height:38px}#b{height:40px}</style>
    <title-bar></title-bar><menu-bar></menu-bar><tool-bar id="a"></tool-bar><tool-bar id="b"></tool-bar><formula-bar></formula-bar>
    <sheet-area style="height:819px"></sheet-area><find-bar></find-bar><status-bar></status-bar>`);
    const q=s=>this.shadowRoot.querySelector(s);
    q('#a').items=[['new',28],['v',50.5],['open',72],['v',94.5],['save',116],['v',138.5],['|',149.5],['pdf',169.5],['print',203],['preview',236],['|',256],['cut',277],['copy',310],['paste',341],['v',364],['|',374.5],['brush',395],['clear',429],['|',449],['undo',466.5],['g',489.5],['redo',511],['g',533.5],['|',544.5],['find',566.5],['spell',599],['|',618],['rowi',636.5],['v',659],['coli',680.5],['v',703.5],['|',714.5],['sort',735],['asc',769],['desc',802],['filter',834.5],['|',854.5],['image',875],['chart',908],['pivot',940.5],['|',961.5],['omega',981],['v',1002.5],['link',1027],['comment',1060],['hdr',1092],['|',1112.5],['parea',1134],['freeze',1164],['v',1186.5],['split',1209.5,1],['|',1230.5],['shapes',1251]];
    q('#b').items=[['c',85,{w:144,s:110,t:'Calibri',tw:43,p:11,i:1}],['c',207.5,{w:85,s:51,t:'12',tw:15,p:11}],['|',254.5],['bold',275],['ital',307.5],['under',341],['|',361.5],['fcolor',380],['v',402.5],['bucket',424],['v',446.5],['|',457.5],['left',478],['center',510.5,1],['right',544],['|',564.5],['wrap',586],['merge',617],['|',638.5],['top',659],['mid',692],['bot',724.5,1],['|',745.5],['money',763.5],['v',786.5],['pct',810],['num',843],['date',876],['|',896.5],['deca',917],['decd',950],['|',970.5],['ind',991],['outd',1024],['|',1044.5],['border',1062.5],['v',1085.5],['bstyle',1106],['v',1129.5],['bcolor',1151],['v',1173.5],['|',1184.5],['cond',1203],['v',1225.5]];
  }
}
customElements.define('calc-window', CalcWindow);
</script>
</body>
</html>
